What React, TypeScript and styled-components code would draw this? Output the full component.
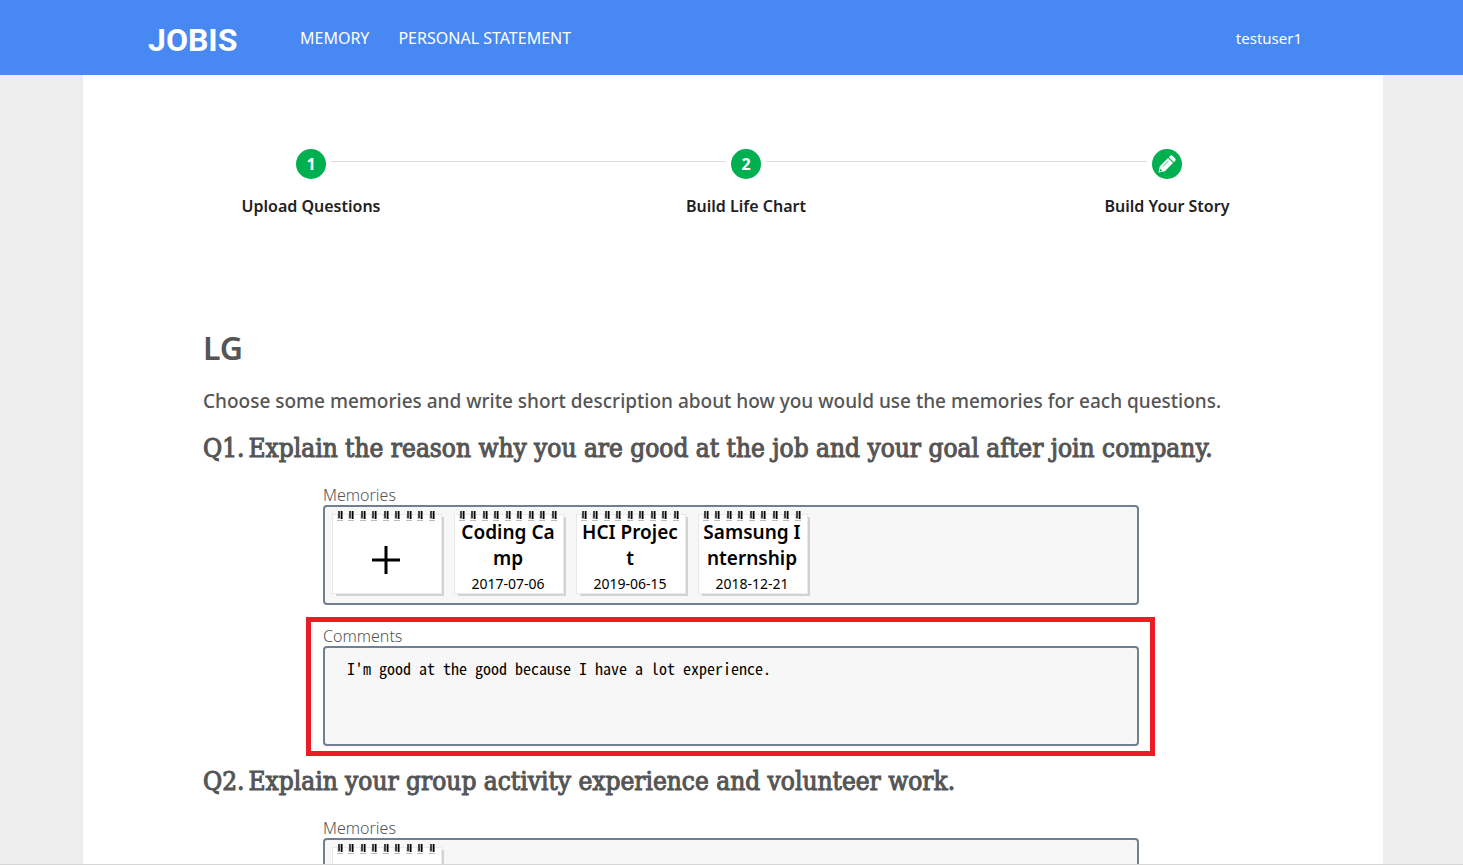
import React from "react";
import styled, { createGlobalStyle } from "styled-components";

const GlobalStyle = createGlobalStyle`
  *, *::before, *::after { box-sizing: border-box; }
  body {
    margin: 0;
    background: #ededed;
    font-family: "Noto Sans", "Open Sans", sans-serif;
    font-size: 16px;
    color: #555;
  }
  h1, h2, h3, p, ol { margin: 0; padding: 0; }
`;

const Screen = styled.div`
  display: flex;
  flex-direction: column;
  height: 100vh;
  overflow: hidden;
  border-bottom: 1px solid #d5d5d5;
`;

const Header = styled.header`
  display: flex;
  align-items: center;
  flex: none;
  height: 75px;
  padding: 0 161px 0 148px;
  background: #4888f2;
`;

const Logo = styled.a`
  width: 152px;
  padding-top: 4px;
  color: #fff;
  font-family: Roboto, sans-serif;
  font-size: 32px;
  font-weight: 700;
  line-height: 40px;
  text-decoration: none;
`;

const Nav = styled.nav`
  display: flex;
  flex: 1;
  gap: 29px;
`;

const HeaderLink = styled.a<{ $small?: boolean }>`
  color: #fff;
  font-size: ${(p) => (p.$small ? "15px" : "16px")};
  line-height: 24px;
  text-decoration: none;
`;

const Page = styled.main`
  flex: 1;
  margin: 0 80px 0 83px;
  padding-top: 74px;
  background: #fff;
`;

const Stepper = styled.ol`
  display: grid;
  grid-template-columns: 40px 395fr 40px 381fr 40px;
  padding: 0 196px 0 208px;
  list-style: none;
`;

const Step = styled.li`
  display: flex;
  flex-direction: column;
  align-items: center;
  gap: 15px;
`;

const StepLine = styled.li`
  height: 1px;
  margin-top: 12px;
  background: #dcdcdc;
`;

const StepBadge = styled.span`
  display: flex;
  align-items: center;
  justify-content: center;
  width: 30px;
  height: 30px;
  border-radius: 50%;
  background: #00b050;
  color: #fff;
  font-size: 16px;
  font-weight: 700;
`;

const StepLabel = styled.span`
  color: #212121;
  font-size: 16px;
  font-weight: 600;
  line-height: 24px;
  white-space: nowrap;
`;

const Content = styled.div`
  padding: 110px 120px 0;
`;

const Company = styled.h1`
  font-size: 32px;
  font-weight: 600;
  line-height: 40px;
`;

const Guide = styled.h3`
  margin-top: 20px;
  font-size: 19px;
  font-weight: 500;
  line-height: 26px;
  white-space: nowrap;
`;

const Question = styled.section`
  padding-top: 16px;

  & + & {
    padding-top: 7px;
  }
`;

const QuestionTitle = styled.h2`
  display: flex;
  gap: 4px;
  font-family: "DejaVu Serif Condensed", "DejaVu Serif", serif;
  font-size: 26px;
  font-weight: 400;
  line-height: 36px;
  white-space: nowrap;
  -webkit-text-stroke: 1px #555;
`;

const Answers = styled.div`
  padding: 19px 108px 0 103px;
`;

const Field = styled.div<{ $marked?: boolean }>`
  display: flex;
  flex-direction: column;
  padding: ${(p) => (p.$marked ? "4px 11px 5px 12px" : "0 16px 0 17px")};
  border: ${(p) => (p.$marked ? "5px solid #ed1c24" : "none")};
  margin-top: ${(p) => (p.$marked ? "12px" : "0")};
`;

const FieldLabel = styled.label`
  font-size: 16px;
  font-weight: 300;
  line-height: 20px;
`;

const MemoryList = styled.div`
  display: flex;
  gap: 10px;
  height: 100px;
  padding: 4px 7px;
  border: 2px solid #708090;
  border-radius: 4px;
  background: #f7f7f7;
`;

const Comment = styled.textarea`
  height: 100px;
  padding: 8px 22px;
  border: 2px solid #708090;
  border-radius: 4px;
  background: #f7f7f7;
  color: #000;
  font-family: "Noto Sans Mono CJK KR", "Liberation Mono", monospace;
  font-size: 16px;
  line-height: 24px;
  resize: none;
  outline: none;
`;

const Card = styled.button`
  position: relative;
  display: flex;
  flex-direction: column;
  align-items: center;
  width: 112px;
  height: 85px;
  padding: 8px 7px 0 3px;
  border: 0;
  background: none;
  color: #000;
  font-family: inherit;
  isolation: isolate;
`;

const PaperArt = styled.svg`
  position: absolute;
  inset: 0;
  z-index: -1;
`;

const CardTitle = styled.span`
  width: 100%;
  font-size: 19px;
  font-weight: 600;
  line-height: 26px;
  text-align: center;
  word-break: break-all;
`;

const CardDate = styled.span`
  font-size: 14px;
  line-height: 26px;
`;

const PlusIcon = styled.svg`
  margin-top: 27px;
`;

const rings = [6, 17, 29, 40, 52, 63, 75, 86, 98];

function Paper() {
  return (
    <PaperArt width="112" height="86" viewBox="0 0 112 86" aria-hidden="true">
      <rect x="4" y="6" width="108" height="79" fill="#d3d3d3" />
      <rect x="0" y="3" width="110" height="80" fill="#e9e9e6" />
      <rect x="1" y="4" width="108" height="78" fill="#fff" />
      {rings.map((x) => (
        <g key={x}>
          <rect x={x - 1} y="9" width="6" height="1" fill="#bbb" />
          <rect x={x - 1} y="3" width="6" height="5" fill="#ddd" />
          <rect x={x} y="0" width="5" height="8" fill="#aaa" />
          <rect x={x} y="0" width="2" height="7" fill="#444" />
          <rect x={x + 3} y="0" width="1" height="8" fill="#000" />
          <rect x={x + 4} y="0" width="1" height="8" fill="#777" />
        </g>
      ))}
    </PaperArt>
  );
}

function AddCard() {
  return (
    <Card type="button" aria-label="Add memory">
      <Paper />
      <PlusIcon width="28" height="28" viewBox="0 0 28 28" aria-hidden="true">
        <path d="M14 0v28M0 14h28" stroke="#000" strokeWidth="3" />
      </PlusIcon>
    </Card>
  );
}

function MemoryCard({ title, date }: { title: string; date: string }) {
  return (
    <Card type="button">
      <Paper />
      <CardTitle>{title}</CardTitle>
      <CardDate>{date}</CardDate>
    </Card>
  );
}

function PencilIcon() {
  return (
    <svg width="18" height="18" viewBox="0 0 18 18" aria-hidden="true">
      <path
        fill="#fff"
        d="M.6 17.400l1.200-6.200L10 3l5 5-8.200 8.200zM10.800 2.200l1.300-1.300q1.300-1.200 2.600 0l2.400 2.400q1.200 1.300 0 2.600l-1.300 1.300z"
      />
      <path d="M5 11.400l5.400-5.400" stroke="#00b050" strokeWidth=".8" />
      <path d="M2.200 13.800l2 2-1.700.4-.7-.7z" fill="#00b050" />
    </svg>
  );
}

const memories = [
  { title: "Coding Camp", date: "2017-07-06" },
  { title: "HCI Project", date: "2019-06-15" },
  { title: "Samsung Internship", date: "2018-12-21" },
];

export default function App() {
  return (
    <>
      <GlobalStyle />
      <Screen>
        <Header>
          <Logo href="#home">JOBIS</Logo>
          <Nav>
            <HeaderLink href="#memory">MEMORY</HeaderLink>
            <HeaderLink href="#statement">PERSONAL STATEMENT</HeaderLink>
          </Nav>
          <HeaderLink $small href="#account">testuser1</HeaderLink>
        </Header>
        <Page>
          <Stepper>
            <Step>
              <StepBadge>1</StepBadge>
              <StepLabel>Upload Questions</StepLabel>
            </Step>
            <StepLine aria-hidden="true" />
            <Step>
              <StepBadge>2</StepBadge>
              <StepLabel>Build Life Chart</StepLabel>
            </Step>
            <StepLine aria-hidden="true" />
            <Step>
              <StepBadge>
                <PencilIcon />
              </StepBadge>
              <StepLabel>Build Your Story</StepLabel>
            </Step>
          </Stepper>
          <Content>
            <Company>LG</Company>
            <Guide>
              Choose some memories and write short description about how you would use the memories for each questions.
            </Guide>
            <Question>
              <QuestionTitle>
                <span>Q1.</span>
                <span>Explain the reason why you are good at the job and your goal after join company.</span>
              </QuestionTitle>
              <Answers>
                <Field>
                  <FieldLabel as="span">Memories</FieldLabel>
                  <MemoryList>
                    <AddCard />
                    {memories.map((m) => (
                      <MemoryCard key={m.title} {...m} />
                    ))}
                  </MemoryList>
                </Field>
                <Field $marked>
                  <FieldLabel htmlFor="comment-1">Comments</FieldLabel>
                  <Comment id="comment-1" defaultValue="I'm good at the good because I have a lot experience." />
                </Field>
              </Answers>
            </Question>
            <Question>
              <QuestionTitle>
                <span>Q2.</span>
                <span>Explain your group activity experience and volunteer work.</span>
              </QuestionTitle>
              <Answers>
                <Field>
                  <FieldLabel as="span">Memories</FieldLabel>
                  <MemoryList>
                    <AddCard />
                  </MemoryList>
                </Field>
              </Answers>
            </Question>
          </Content>
        </Page>
      </Screen>
    </>
  );
}
